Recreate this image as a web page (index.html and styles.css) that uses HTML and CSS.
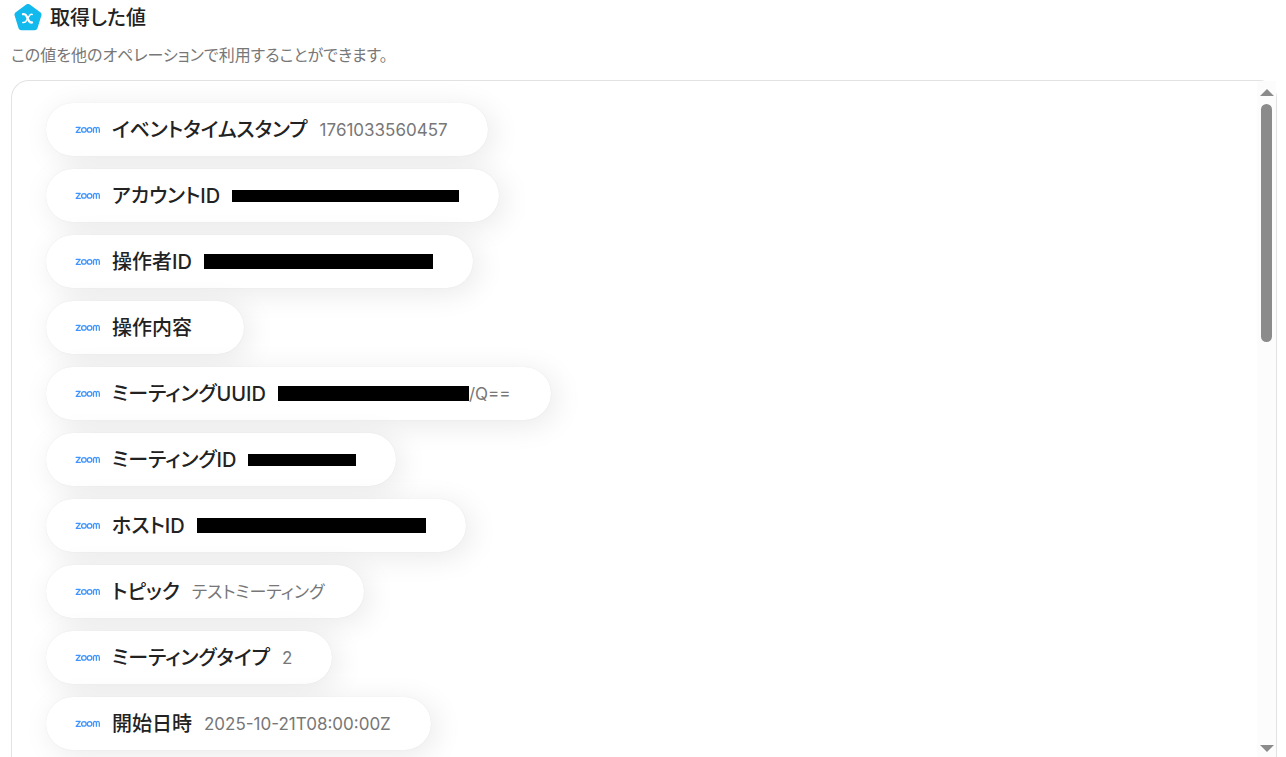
FILE: index.html
```html
<!DOCTYPE html>
<html lang="ja">
<head>
    <meta charset="UTF-8">
    <meta name="viewport" content="width=device-width, initial-scale=1.0">
    <title>取得した値</title>
    <link rel="stylesheet" href="styles.css">
</head>
<body>
    <svg class="defs" width="0" height="0" aria-hidden="true">
        <symbol id="zoom" viewBox="0 0 25 8">
            <g fill="none" stroke="#3f94ff" stroke-width="1.3" stroke-linecap="round" stroke-linejoin="round">
                <path d="M1.2 1.4H5.2L1.2 6.3H5.4"/>
                <circle cx="8.9" cy="3.9" r="2.3"/>
                <circle cx="14.6" cy="3.9" r="2.3"/>
                <path d="M18.5 6.3V3.2a1.4 1.8 0 0 1 2.9 0V6.3M21.4 3.2a1.4 1.8 0 0 1 2.9 0V6.3"/>
            </g>
        </symbol>
    </svg>
    <div class="page">
        <header class="heading">
            <svg class="logo" viewBox="0 0 28 28" aria-hidden="true">
                <path d="M14 3L24.5 10.6L20.6 23.3H7.4L3.5 10.6Z" fill="#12b9ec" stroke="#12b9ec" stroke-width="6" stroke-linejoin="round"/>
                <path d="M9 10.2C11.4 9.8 12 10.8 12.6 12.2L14.8 16.8C15.4 18.2 16.2 18.8 18 18.4" fill="none" stroke="#fff" stroke-width="2.3" stroke-linecap="round"/>
                <path d="M18.2 10.4C16.6 10 15.9 10.8 15.1 12.2L12.3 16.8C11.5 18.2 10.7 18.8 8.8 18.4" fill="none" stroke="#fff" stroke-width="1.5" stroke-linecap="round"/>
            </svg>
            <h1>取得した値</h1>
        </header>
        <p class="description">この値を他のオペレーションで利用することができます。</p>
        <div class="panel">
            <ul class="values">
                <li class="pill"><svg class="zoom"><use href="#zoom"/></svg><span class="label">イベントタイムスタンプ</span><span class="value">1761033560457</span></li>
                <li class="pill"><svg class="zoom"><use href="#zoom"/></svg><span class="label">アカウントID</span><span class="value"><span class="mask thin w-account"></span></span></li>
                <li class="pill"><svg class="zoom"><use href="#zoom"/></svg><span class="label">操作者ID</span><span class="value"><span class="mask w-user"></span></span></li>
                <li class="pill"><svg class="zoom"><use href="#zoom"/></svg><span class="label">操作内容</span><span class="value"></span></li>
                <li class="pill"><svg class="zoom"><use href="#zoom"/></svg><span class="label">ミーティングUUID</span><span class="value"><span class="mask w-uuid"></span>/Q==</span></li>
                <li class="pill"><svg class="zoom"><use href="#zoom"/></svg><span class="label">ミーティングID</span><span class="value"><span class="mask thin w-meeting"></span></span></li>
                <li class="pill"><svg class="zoom"><use href="#zoom"/></svg><span class="label">ホストID</span><span class="value"><span class="mask w-user"></span></span></li>
                <li class="pill"><svg class="zoom"><use href="#zoom"/></svg><span class="label">トピック</span><span class="value">テストミーティング</span></li>
                <li class="pill"><svg class="zoom"><use href="#zoom"/></svg><span class="label">ミーティングタイプ</span><span class="value">2</span></li>
                <li class="pill"><svg class="zoom"><use href="#zoom"/></svg><span class="label">開始日時</span><span class="value">2025-10-21T08:00:00Z</span></li>
            </ul>
            <div class="scrollbar" aria-hidden="true">
                <span class="arrow up"></span>
                <span class="track"><span class="thumb"></span></span>
                <span class="arrow down"></span>
            </div>
        </div>
    </div>
</body>
</html>
```

FILE: styles.css
```css
* {
    box-sizing: border-box;
}
body {
    margin: 0;
    background-color: #fff;
    color: #222;
    font-family: Inter, "Noto Sans CJK JP", sans-serif;
    font-feature-settings: "palt";
}
.defs {
    display: block;
}
.page {
    display: flex;
    flex-direction: column;
    height: 100vh;
    padding: 0 9px 0 11px;
    overflow: hidden;
}
.heading {
    display: flex;
    align-items: center;
    gap: 8px;
    height: 35px;
    padding-left: 3px;
}
.logo {
    width: 28px;
    height: 28px;
}
h1 {
    margin: 0;
    font-size: 20px;
    font-weight: 500;
    line-height: 28px;
}
.description {
    margin: 8px 0 13px;
    color: #777;
    font-size: 16px;
    line-height: 24px;
}
.panel {
    display: flex;
    flex: 1;
    min-height: 0;
    border: 1px solid #e2e2e2;
    border-bottom: 0;
    border-radius: 18px 18px 0 0;
}
.values {
    display: flex;
    flex: 1;
    flex-direction: column;
    align-items: flex-start;
    gap: 13px;
    margin: 0;
    padding: 22px 34px 0;
    list-style: none;
}
.pill {
    display: flex;
    flex-shrink: 0;
    align-items: center;
    gap: 12px;
    height: 53px;
    padding: 0 40px 0 29px;
    border-radius: 27px;
    background-color: #fff;
    box-shadow: 5px 5px 30px rgba(0, 0, 0, 0.09), 0 0 1px rgba(0, 0, 0, 0.1);
    white-space: nowrap;
}
.zoom {
    width: 25px;
    height: 8px;
}
.label {
    font-size: 20px;
    font-weight: 500;
    line-height: 28px;
}
.value {
    display: flex;
    align-items: center;
    color: #777;
    font-size: 17px;
    line-height: 24px;
}
.mask {
    height: 15px;
    background-color: #000;
}
.thin {
    height: 12px;
}
.w-account {
    width: 227px;
}
.w-user {
    width: 229px;
}
.w-uuid {
    width: 191px;
}
.w-meeting {
    width: 108px;
}
.scrollbar {
    display: flex;
    flex-direction: column;
    align-items: center;
    width: 19px;
    padding: 8px 0 5px;
    background-color: #fcfcfc;
}
.arrow {
    border: 7px solid transparent;
}
.up {
    border-top: 0;
    border-bottom-color: #8b8b8b;
}
.down {
    border-bottom: 0;
    border-top-color: #8b8b8b;
}
.track {
    flex: 1;
    width: 11px;
    padding: 8px 0;
}
.thumb {
    display: block;
    height: 238px;
    border-radius: 6px;
    background-color: #8b8b8b;
}
```
